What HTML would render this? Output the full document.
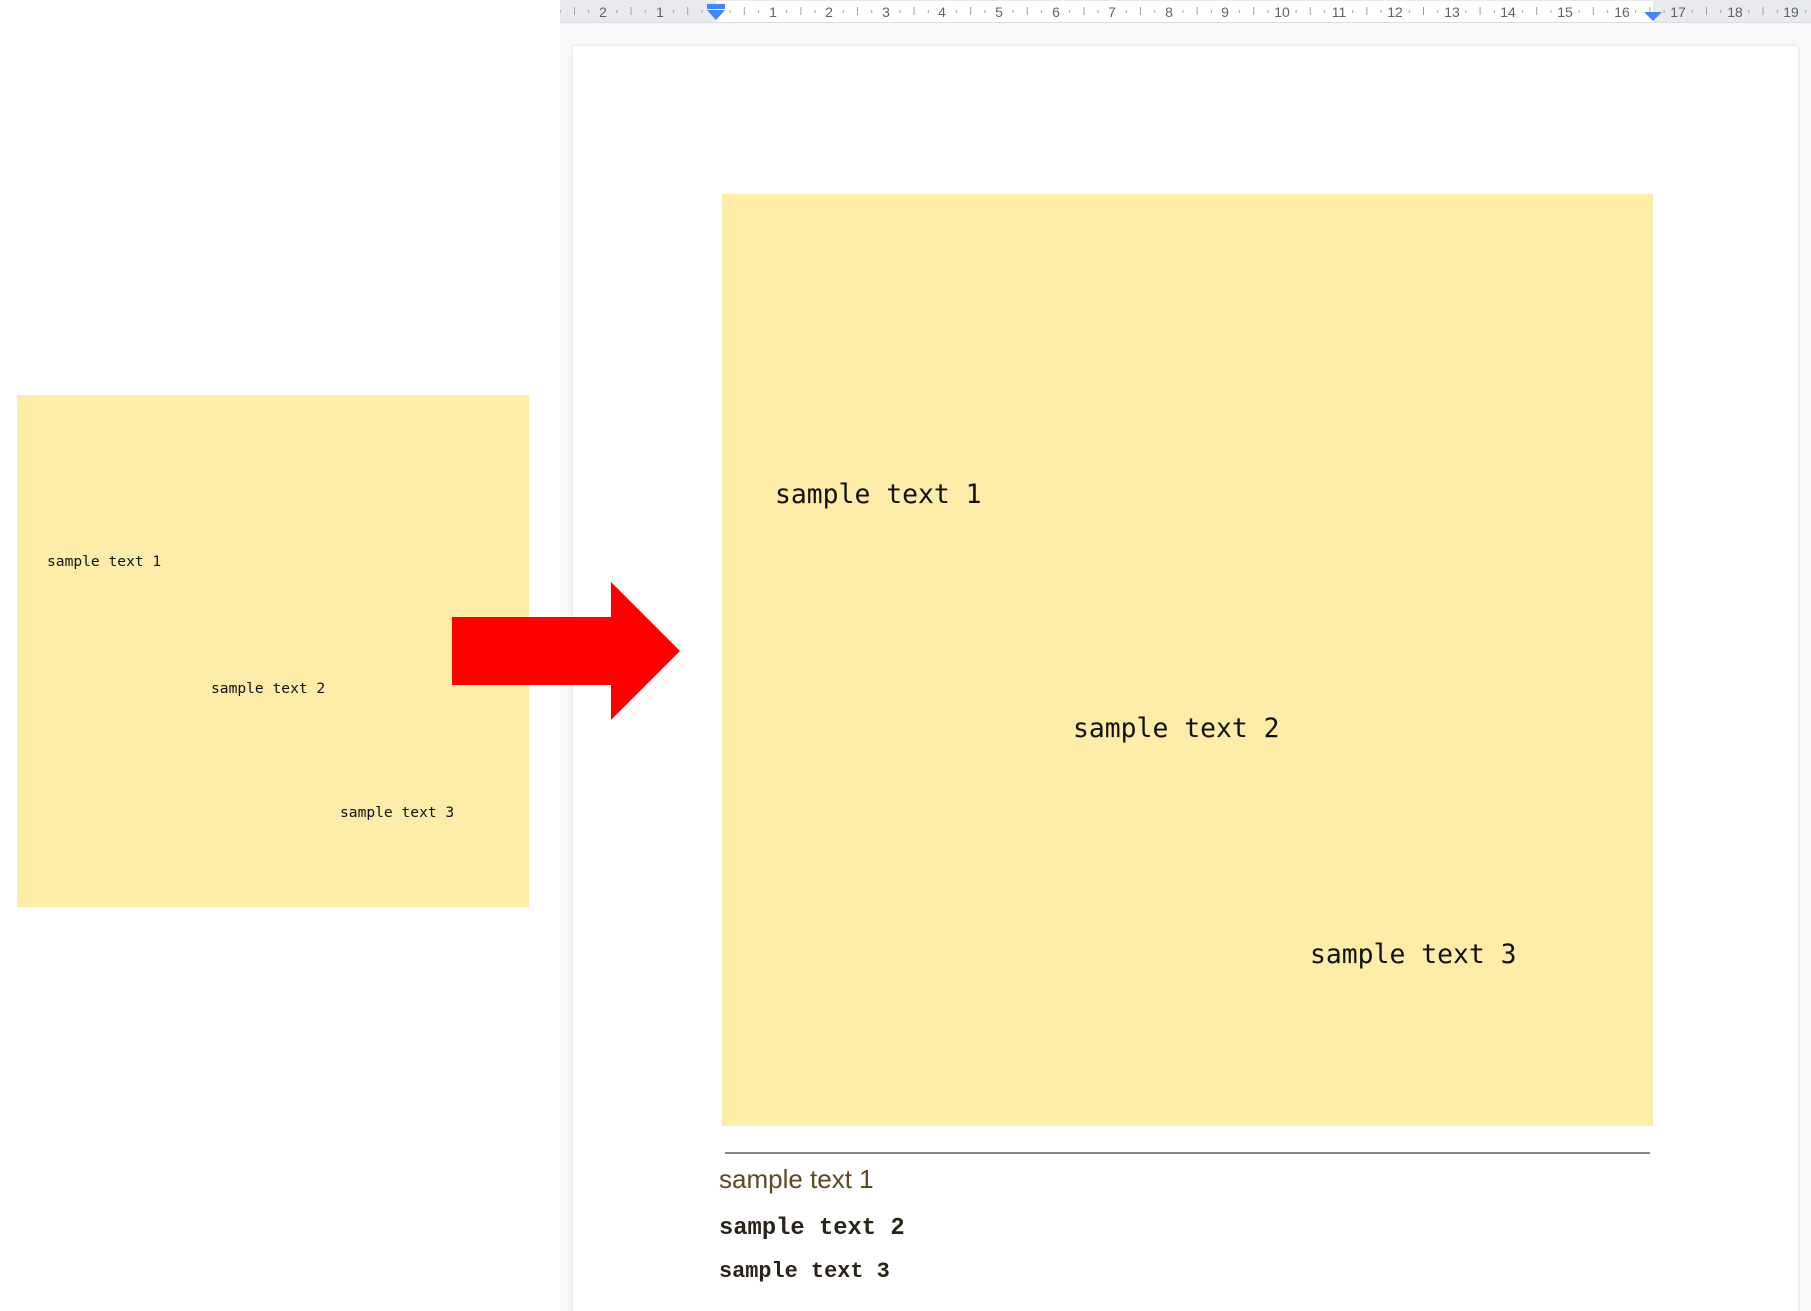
<!DOCTYPE html>
<html><head><meta charset="utf-8"><style>
html,body{margin:0;padding:0;background:#fff;width:1811px;height:1311px;overflow:hidden}
</style></head><body>
<svg width="1811" height="1311" xmlns="http://www.w3.org/2000/svg" style="display:block">
<defs>
<pattern id="tk" x="716" y="0" width="56.6" height="23" patternUnits="userSpaceOnUse">
<rect x="13.6" y="10" width="1" height="3" fill="#9aa0a6"/>
<rect x="27.8" y="7" width="1" height="8" fill="#9aa0a6"/>
<rect x="42" y="10" width="1" height="3" fill="#9aa0a6"/>
</pattern>
<filter id="sh" x="-5%" y="-5%" width="110%" height="110%"><feDropShadow dx="0" dy="0" stdDeviation="1.5" flood-color="#000" flood-opacity="0.15"/></filter>
</defs>
<rect x="560" y="0" width="1251" height="1311" fill="#f8f9fa"/>
<rect x="560" y="0" width="1251" height="22" fill="#e8eaed"/>
<rect x="716" y="1" width="937" height="21" fill="#fff"/>
<rect x="560" y="22" width="1251" height="1" fill="#dadce0"/>
<rect x="560" y="0" width="1251" height="22" fill="url(#tk)"/>
<g font-family="Liberation Sans, sans-serif" font-size="14" fill="#5f6368" text-anchor="middle">
<text x="603" y="17">2</text><text x="660" y="17">1</text>
<text x="773" y="17">1</text><text x="829" y="17">2</text><text x="886" y="17">3</text><text x="942" y="17">4</text><text x="999" y="17">5</text><text x="1056" y="17">6</text><text x="1112" y="17">7</text><text x="1169" y="17">8</text><text x="1225" y="17">9</text><text x="1282" y="17">10</text><text x="1339" y="17">11</text><text x="1395" y="17">12</text><text x="1452" y="17">13</text><text x="1508" y="17">14</text><text x="1565" y="17">15</text><text x="1622" y="17">16</text><text x="1678" y="17">17</text><text x="1735" y="17">18</text><text x="1791" y="17">19</text>
</g>
<rect x="707" y="4" width="18" height="5" fill="#4285f4"/>
<polygon points="707,10 725,10 716,20" fill="#4285f4"/>
<polygon points="1644,12 1662,12 1653,21" fill="#4285f4"/>
<rect x="573" y="46" width="1225" height="1275" fill="#fff" filter="url(#sh)"/>
<rect x="17" y="395" width="512" height="512" fill="#feeca9"/>
<g font-family="DejaVu Sans Mono, monospace" font-size="14.6" fill="#111">
<text x="47" y="566">sample text 1</text>
<text x="211" y="693">sample text 2</text>
<text x="340" y="817">sample text 3</text>
</g>
<rect x="722" y="194" width="931" height="932" fill="#feeca9"/>
<g font-family="DejaVu Sans Mono, monospace" font-size="26.4" fill="#111">
<text x="775" y="503">sample text 1</text>
<text x="1073" y="737">sample text 2</text>
<text x="1310" y="963">sample text 3</text>
</g>
<polygon points="452,617 611,617 611,582 680,651 611,720 611,685 452,685" fill="#ff0000"/>
<rect x="725" y="1152" width="925" height="2" fill="#888"/>
<text x="719" y="1188" font-family="Liberation Sans, sans-serif" font-size="26" fill="#5b4a1f">sample text 1</text>
<text x="719" y="1234" font-family="Liberation Mono, monospace" font-weight="bold" font-size="23.8" fill="#2a2418">sample text 2</text>
<text x="719" y="1277" font-family="Liberation Mono, monospace" font-weight="bold" font-size="21.9" fill="#2a2418">sample text 3</text>
</svg>
</body></html>
